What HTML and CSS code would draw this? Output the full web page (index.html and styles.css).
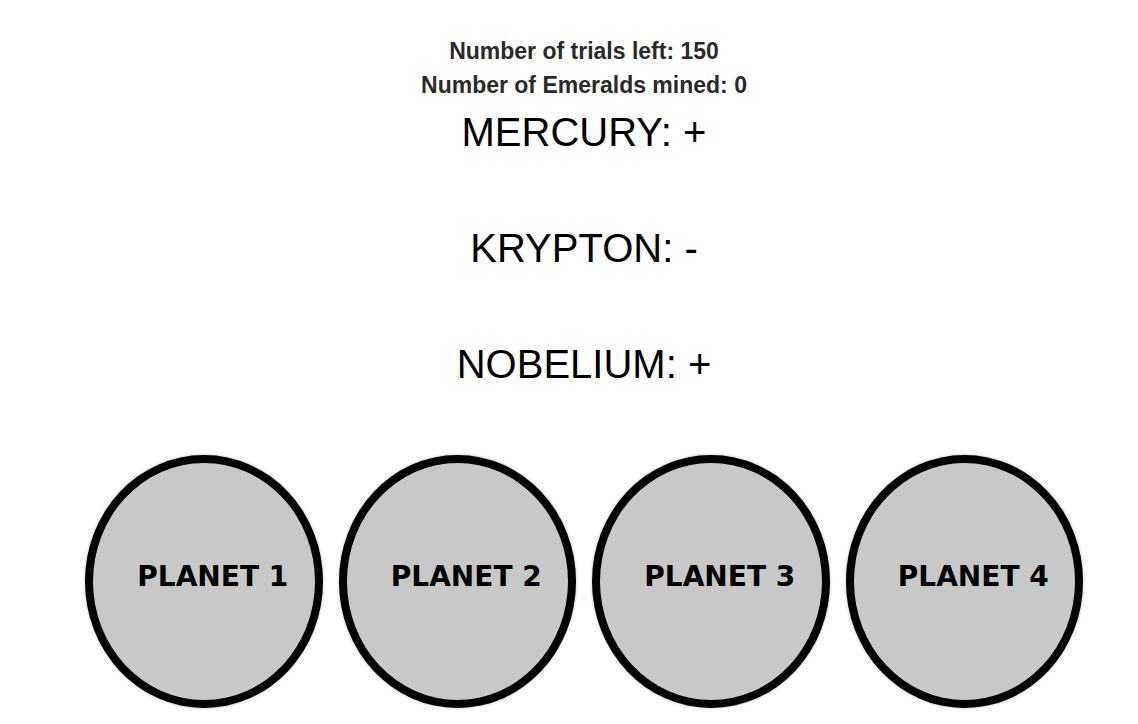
FILE: index.html
```html
<!DOCTYPE html>
<html lang="en">
<head>
<meta charset="utf-8">
<title>Emerald mining</title>
<link rel="stylesheet" href="styles.css">
</head>
<body>
<main class="game">
  <header class="status">
    <p>Number of trials left: 150</p>
    <p>Number of Emeralds mined: 0</p>
  </header>
  <section class="cues">
    <p>MERCURY: +</p>
    <p>KRYPTON: -</p>
    <p>NOBELIUM: +</p>
  </section>
  <div class="planets">
    <button class="planet" type="button">PLANET 1</button>
    <button class="planet" type="button">PLANET 2</button>
    <button class="planet" type="button">PLANET 3</button>
    <button class="planet" type="button">PLANET 4</button>
  </div>
</main>
</body>
</html>
```
FILE: styles.css
```css
* {
  box-sizing: border-box;
}

body {
  margin: 0;
  background: #fff;
  color: #000;
  font-family: "Liberation Sans", Arial, sans-serif;
}

p {
  margin: 0;
}

.game {
  padding: 34px 55px 16px 85px;
  text-align: center;
}

.status {
  color: #2a2a2a;
  font-size: 23px;
  font-weight: bold;
  line-height: 34px;
}

.cues {
  display: grid;
  gap: 68px;
  padding-top: 6px;
  font-size: 40px;
  line-height: 48px;
}

.planets {
  display: grid;
  grid-template-columns: repeat(4, 1fr);
  gap: 16px;
  padding-top: 67px;
}

.planet {
  height: 253px;
  padding: 0 0 10px 18px;
  border: 8px solid #000;
  border-radius: 50%;
  background: #c8c8c8;
  box-shadow: 0 0 3px rgba(0, 0, 0, 0.3);
  color: #000;
  font: bold 28px "DejaVu Sans", Verdana, sans-serif;
  white-space: nowrap;
}
```
